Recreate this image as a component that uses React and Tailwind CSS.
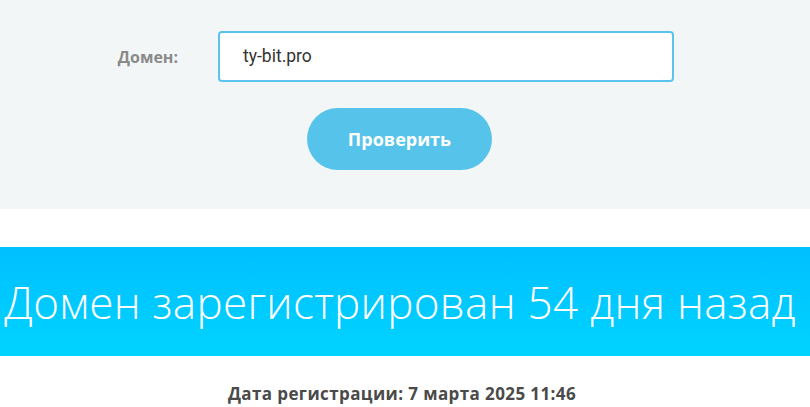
export default function App() {
    return (
        <div className="w-[810px] h-[407px] overflow-hidden bg-white font-['Open_Sans',sans-serif]">
            {/* check form */}
            <div className="h-[209px] bg-[#f3f6f7] pt-[31px]">
                <div className="flex items-center">
                    <label className="w-[178px] text-right text-[16px] font-bold text-[#8a8a8a]">Домен:</label>
                    <div className="ml-[40px] w-[456px] h-[51px] border-2 border-[#5bc3ec] rounded-[4px] bg-white flex items-center pl-[23px]">
                        <span className="text-[17.5px] text-[#333] font-['Roboto',sans-serif]">ty-bit.pro</span>
                    </div>
                </div>
                <div className="flex mt-[26px] pl-[307px]">
                    <button className="w-[185px] h-[62px] rounded-full bg-[#56c4ea] text-white text-[18px] font-bold">
                        Проверить
                    </button>
                </div>
            </div>

            <div className="h-[38px]" />

            {/* result banner */}
            <div className="h-[109px] bg-gradient-to-b from-[#00bfff] to-[#00d3ff] flex items-center justify-center overflow-hidden">
                <h1 className="whitespace-nowrap text-white font-light text-[44px] leading-none tracking-[0.3px] pr-[10px]">
                    Домен зарегистрирован 54 дня назад
                </h1>
            </div>

            <div className="flex justify-center pt-[25px] pr-[6px]">
                <p className="text-[17px] font-bold text-[#4a4a4a] tracking-[0.4px] whitespace-nowrap">Дата регистрации: 7 марта 2025 11:46</p>
            </div>
        </div>
    )
}
